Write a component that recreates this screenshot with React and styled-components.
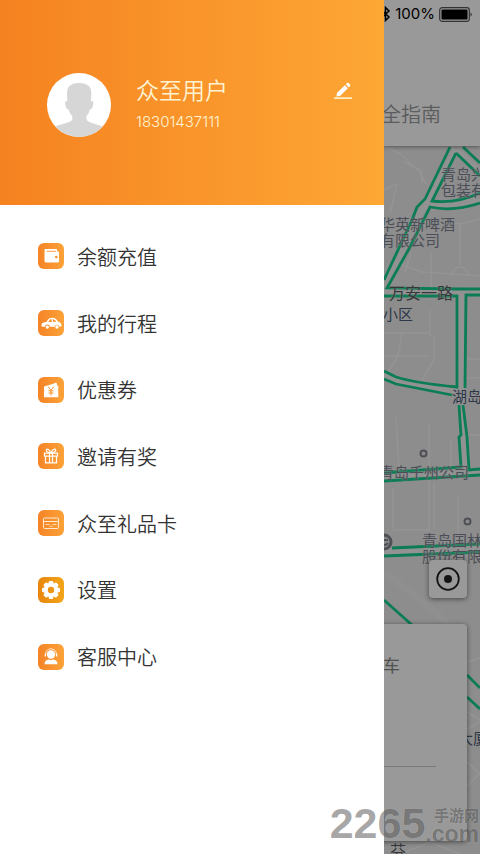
import React from "react";
import styled, { createGlobalStyle } from "styled-components";

const CJK = `"Noto Sans CJK SC", sans-serif`;

const MENU = [
  { icon: "wallet", label: "余额充值" },
  { icon: "car", label: "我的行程" },
  { icon: "coupon", label: "优惠券" },
  { icon: "gift", label: "邀请有奖" },
  { icon: "card", label: "众至礼品卡" },
  { icon: "gear", label: "设置", deep: true },
  { icon: "service", label: "客服中心" },
];

const PLACES = [
  { x: 441, y: 166, lines: ["青岛兴", "包装有"] },
  { x: 380, y: 216, lines: ["华英新啤酒", "有限公司"] },
  { x: 389, y: 284, lines: ["万安一路"], tone: "road" },
  { x: 383, y: 306, lines: ["小区"], tone: "area" },
  { x: 452, y: 388, lines: ["湖岛"], tone: "area" },
  { x: 379, y: 464, lines: ["青岛千州公司"] },
  { x: 422, y: 532, lines: ["青岛国林", "股份有限"] },
  { x: 458, y: 730, lines: ["大厦"], tone: "area" },
  { x: 390, y: 842, lines: ["芬"], tone: "road" },
];

const MAP_TOP = 146;

const TONES = {
  company: "#7d8391",
  road: "#5a5d63",
  area: "#4c5d79",
};

const GEAR_TEETH = [0, 45, 90, 135, 180, 225, 270, 315];

function MenuIcon({ name }) {
  switch (name) {
    case "wallet":
      return (
        <svg viewBox="0 0 26 26" fill="none">
          <path
            d="M6.500 7.200c0-.8.5-1.200 1.200-1.200H18c.8 0 1.200.4 1.200 1.200v1.300h.6c.7 0 1.200.5 1.200 1.200v8.600c0 .8-.5 1.300-1.300 1.300H8.300c-1.100 0-1.800-.7-1.800-1.800z"
            fill="#fff"
          />
          <path d="M8.500 8.300H18" stroke="#f7922b" strokeWidth=".9" />
          <circle cx="18.300" cy="14" r="1.300" fill="#f7922b" />
        </svg>
      );
    case "car":
      return (
        <svg viewBox="0 0 26 26">
          <path
            d="M3.500 16.500c-.3-2.600.4-3.700 3-4.200l1.800-.3c1.600-2.900 3.200-4.300 6-4.300 2.800.1 4.300 1.500 5.700 3.900 2.700.7 3.800 2.200 3.500 4.700l-2 .4a2.400 2.400 0 0 0-4.700.1h-5a2.400 2.400 0 0 0-4.800 0z"
            fill="#fff"
          />
          <path
            d="M10.200 11.900l1.900-2.300c.5-.3 1-.4 1.600-.4v2.700zM14.900 9.200c1.500.1 2.500.9 3.400 2.500h-3.400z"
            fill="#f7922b"
          />
          <circle cx="9.300" cy="17.100" r="1.700" fill="#fff" />
          <circle cx="19" cy="17" r="1.700" fill="#fff" />
        </svg>
      );
    case "coupon":
      return (
        <svg viewBox="0 0 26 26" fill="none">
          <path
            d="M6 9.500l8.500-2.600 4-1.400.8 3.200h1v4.300l-.6.6.6.6v6H6v-6l.6-.6-.6-.6z"
            fill="#fff"
          />
          <path
            d="M10.300 9.700l2.700 3.700 2.700-3.700M13 13.400v5.200M10.500 13.800h5M10.500 16h5"
            stroke="#f7922b"
            strokeWidth="1"
          />
        </svg>
      );
    case "gift":
      return (
        <svg viewBox="0 0 26 26" fill="none" stroke="#fff" strokeWidth="1.200">
          <path d="M6.500 10.200h13v3h-13zM7.500 13.200h11v6.600h-11zM11.500 10.200v9.600M14.500 10.200v9.600" />
          <path d="M13 10c-1.500-3.600-3.800-4.500-4.600-3.200-.7 1.500 1.500 2.900 4.600 3.200zM13 10c1.500-3.600 3.800-4.500 4.600-3.200.7 1.500-1.500 2.900-4.600 3.200z" />
        </svg>
      );
    case "card":
      return (
        <svg viewBox="0 0 26 26" fill="none" stroke="#ffe9d0" strokeWidth="1">
          <rect x="5.500" y="8" width="15" height="10.500" rx="1" />
          <path d="M5.500 11.500h15" />
          <path d="M7.500 14.500h4M14.500 14.500h4M11.500 16.300h3" strokeWidth=".8" />
        </svg>
      );
    case "gear":
      return (
        <svg viewBox="0 0 26 26" fill="none">
          {GEAR_TEETH.map((deg) => (
            <rect
              key={deg}
              x="10.700"
              y="4"
              width="4.600"
              height="5"
              rx="1.200"
              fill="#fff"
              transform={`rotate(${deg} 13 13)`}
            />
          ))}
          <circle cx="13" cy="13" r="5.200" stroke="#fff" strokeWidth="4" />
        </svg>
      );
    default:
      return (
        <svg viewBox="0 0 26 26" fill="none">
          <circle cx="13" cy="10.500" r="4.200" fill="#fff" />
          <path
            d="M7.500 11.500V10.300a5.500 5.500 0 0 1 11 0v1.200"
            stroke="#fff"
            strokeWidth=".8"
          />
          <path d="M7.300 9.800v2.600M18.700 9.800v2.600" stroke="#fff" strokeWidth="1.200" />
          <path
            d="M6.500 20.200c0-3 1.800-4.300 4.400-4.700l2.100.8 2.100-.8c2.600.4 4.400 1.700 4.400 4.700z"
            fill="#fff"
          />
        </svg>
      );
  }
}

function StreetMap() {
  return (
    <Streets viewBox="0 146 480 708" preserveAspectRatio="xMaxYMin slice" aria-hidden="true">
      <g fill="none" stroke="#fafafa" strokeWidth="1.500" opacity=".8">
        <path d="M384 146l17 8 18 18 7 12M384 190l13-6-7 30M402 161l20 10v12" />
        <path d="M410 245l-8 20 20 7 58 4M425 222l35 2 20-5M431 253v36M405 273l6-20" />
        <path d="M460 222v43M452 275a8 8 0 1 1 16 0M384 333h45l5 5v22l-12 20M430 310v22M402 334l-4 22-14 22M384 356h45" />
        <path d="M466 359h14M466 378h14M396 417l3 50M429 424v56M451 440v36M467 435h13" />
        <path d="M393 488v42h36v-50M434 482v48M458 496v48" />
        <path d="M467 662l13-4M467 730l13-9M467 762l13 12-13 12M400 854l30-12 30 12M467 712l13 8" />
        <path d="M384 572l44 34 20 18" strokeWidth="7" opacity=".4" />
      </g>
      <g fill="none" stroke="#fafafa" strokeWidth="6" opacity=".6">
        <path d="M456 150l-36 64-36 76M384 292h96M461 292v98l5 80M384 375l12 6 60 11M384 478l96-6M384 552l96-5M456 150l24 22M430 204l24 2 26-8" />
      </g>
      <g fill="none" stroke="#12d08c" strokeWidth="2.800">
        <path d="M450 147l-25 52-8 8-5 13-28 60" />
        <path d="M456 153l-24 48q24 3 48-8M456 153l24 23M463 147l17 16" />
        <path d="M480 203q-27 9-50 4l-20 40-23 41 70 1h23" />
        <path d="M384 296h73v91q-42-4-61-10l-12-6M480 295h-14l-1 93" />
        <path d="M384 379l12 5 56 11M459 405l2 30-2 2 2 30-77 6M463 405l4 32 2 33 11-1M384 481l96-6" />
        <path d="M392 548l88-4M384 556l96-4M384 600l28 25M467 675l13 13M467 697l13 12" />
      </g>
      <g fill="#e6e6e6" stroke="#82868f" strokeWidth="2">
        <circle cx="423.500" cy="453.500" r="3" />
        <circle cx="467.500" cy="521.500" r="3" />
        <circle cx="384" cy="542" r="7" strokeWidth="3" />
        <path d="M384 540h4M384 545q3 0 4-2" fill="none" />
      </g>
    </Streets>
  );
}

export default function App() {
  return (
    <Screen>
      <GlobalStyle />
      <TopBar>
        <StatusBar>
          <svg width="10" height="16" viewBox="0 0 10 16" fill="none" stroke="#000" strokeWidth="1.500">
            <path d="M1 4.500l7 6.500-3.500 3.500v-13L8 5l-7 6.500" />
          </svg>
          <span>100%</span>
          <svg width="34" height="15" viewBox="0 0 34 15" fill="none">
            <rect x=".7" y=".7" width="29.600" height="13.600" rx="2.500" stroke="#555" strokeWidth="1.200" />
            <rect x="2.500" y="2.500" width="26" height="10" rx="1" fill="#000" />
            <path d="M31.500 5.500c1.700.7 1.700 3.300 0 4z" fill="#555" />
          </svg>
        </StatusBar>
        <GuideTab>全指南</GuideTab>
      </TopBar>

      <MapArea>
        <StreetMap />
        {PLACES.map(({ x, y, lines, tone = "company" }) => (
          <Place key={lines[0]} $x={x} $y={y - MAP_TOP} $tone={tone}>
            {lines.map((line) => (
              <span key={line}>{line}</span>
            ))}
          </Place>
        ))}
        <LocateButton type="button" aria-label="定位">
          <svg width="24" height="24" viewBox="0 0 24 24" fill="none">
            <circle cx="12" cy="12" r="10.800" stroke="#222" strokeWidth="1.800" />
            <circle cx="12" cy="12" r="4" fill="#222" />
          </svg>
        </LocateButton>
        <RideCard>
          <RideTitle>车</RideTitle>
          <Divider />
        </RideCard>
      </MapArea>

      <Scrim />

      <Drawer>
        <Profile>
          <svg width="64" height="64" viewBox="0 0 64 64">
            <clipPath id="avatar">
              <circle cx="32" cy="32" r="32" />
            </clipPath>
            <circle cx="32" cy="32" r="32" fill="#fff" />
            <path
              clipPath="url(#avatar)"
              fill="#d6d6d6"
              d="M20.500 28c-.8-6-.9-12 1.500-14.500 2-2.400 5.500-3.500 10-3.500s8 1.100 10.300 3.500c2.400 2.500 2.300 8.500 1.500 14.500 3 0 3 1.500 2 5-.6 2.400-1.300 3.500-3 3.500-.6 3-1.800 4.700-3.300 6.500v3.500c2 3.500 9.500 4 16 7V66H8V53.500c6.500-3 15.500-3.500 17.300-7V43c-1.700-1.800-3-3.500-3.600-6.500-1.700 0-2.400-1.100-3-3.500-1-3.500-1-5 1.800-5z"
            />
          </svg>
          <Identity>
            <UserName>众至用户</UserName>
            <Phone>18301437111</Phone>
          </Identity>
          <EditButton type="button" aria-label="编辑">
            <svg width="18" height="18" viewBox="0 0 18 18" fill="#fff">
              <path d="M2.500 14.500l.4-3.600 8-7.700 3 3.100-7.900 7.800zM11.800 2.300l1.300-1.200c.5-.4 1-.4 1.500 0l1.500 1.500c.4.500.4 1 0 1.500l-1.300 1.300z" />
              <path d="M0 15.300h18V17H0z" fill="#fff0c4" />
            </svg>
          </EditButton>
        </Profile>
        <Menu>
          {MENU.map(({ icon, label, deep }) => (
            <MenuItem key={icon} href="#">
              <IconTile $deep={deep}>
                <MenuIcon name={icon} />
              </IconTile>
              {label}
            </MenuItem>
          ))}
        </Menu>
      </Drawer>

      <Watermark>
        <WatermarkNumber>2265</WatermarkNumber>
        <WatermarkSite>
          <span>手游网</span>
          <b>.com</b>
        </WatermarkSite>
      </Watermark>
    </Screen>
  );
}

const GlobalStyle = createGlobalStyle`
  * {
    box-sizing: border-box;
  }
  body {
    margin: 0;
    font-family: ${CJK};
  }
`;

const Screen = styled.div`
  position: relative;
  display: flex;
  flex-direction: column;
  min-height: 100vh;
  overflow: hidden;
  background: #ebebeb;
`;

const TopBar = styled.header`
  position: relative;
  z-index: 1;
  display: flex;
  flex-direction: column;
  justify-content: space-between;
  align-items: flex-end;
  height: 146px;
  padding-bottom: 17px;
  background: #fff;
  box-shadow: 0 1px 4px rgba(0, 0, 0, 0.4);
`;

const StatusBar = styled.div`
  display: flex;
  align-items: center;
  gap: 4px;
  height: 28px;
  padding-right: 7px;
  font: 15px/28px Inter, sans-serif;
`;

const GuideTab = styled.div`
  padding-right: 39px;
  font-size: 20px;
  font-weight: 350;
  line-height: 30px;
  color: #999;
`;

const MapArea = styled.main`
  position: relative;
  flex: 1;
  display: flex;
  flex-direction: column;
  justify-content: flex-end;
  gap: 26px;
  padding: 0 13px 13px;
  overflow: hidden;
`;

const Streets = styled.svg`
  position: absolute;
  inset: 0;
  width: 100%;
  height: 100%;
`;

const Place = styled.div`
  position: absolute;
  left: ${({ $x }) => $x}px;
  top: ${({ $y }) => $y}px;
  display: flex;
  flex-direction: column;
  font-size: ${({ $tone }) => ($tone === "road" ? 16 : 15)}px;
  line-height: 16px;
  white-space: nowrap;
  color: ${({ $tone }) => TONES[$tone]};
  text-shadow: 0 0 2px #ebebeb;
`;

const LocateButton = styled.button`
  position: relative;
  display: grid;
  place-items: center;
  align-self: flex-end;
  width: 38px;
  height: 38px;
  padding: 0;
  border: 0;
  border-radius: 4px;
  background: #fff;
  box-shadow: 0 1px 5px rgba(0, 0, 0, 0.5);
`;

const RideCard = styled.section`
  position: relative;
  height: 217px;
  padding: 28px 31px 0;
  border-radius: 4px;
  background: #fff;
  box-shadow: 0 1px 5px rgba(0, 0, 0, 0.5);
`;

const RideTitle = styled.div`
  padding-right: 36px;
  font-size: 17px;
  line-height: 26px;
  text-align: right;
  color: #888;
`;

const Divider = styled.hr`
  margin: 88px 0 0;
  border: 0;
  border-top: 1px solid #ccc;
`;

const Scrim = styled.div`
  position: absolute;
  inset: 0;
  z-index: 2;
  background: rgba(0, 0, 0, 0.4);
`;

const Drawer = styled.aside`
  position: absolute;
  inset: 0 auto 0 0;
  z-index: 3;
  width: 80%;
  background: #fff;
`;

const Profile = styled.div`
  display: flex;
  align-items: center;
  height: 205px;
  padding: 5px 32px 0 47px;
  background: linear-gradient(90deg, #f58220, #fda735);
`;

const Identity = styled.div`
  flex: 1;
  margin-left: 25px;
  color: #fff3d2;
`;

const UserName = styled.div`
  font-size: 23px;
  font-weight: 350;
  line-height: 34px;
`;

const Phone = styled.div`
  font: 300 15px/32px Inter, sans-serif;
`;

const EditButton = styled.button`
  display: flex;
  margin-bottom: 28px;
  padding: 0;
  border: 0;
  background: none;
`;

const Menu = styled.nav`
  display: grid;
  grid-auto-rows: 1fr;
  height: 485px;
  padding-top: 18px;
`;

const MenuItem = styled.a`
  display: flex;
  align-items: center;
  gap: 13px;
  padding-left: 38px;
  font-size: 20px;
  font-weight: 350;
  color: #333;
  text-decoration: none;
`;

const IconTile = styled.span`
  display: flex;
  width: 26px;
  height: 26px;
  border-radius: 6px;
  background: ${({ $deep }) =>
    $deep
      ? "linear-gradient(90deg, #e8860c, #f3a51a)"
      : "linear-gradient(90deg, #f58427, #fca238)"};

  svg {
    width: 100%;
  }
`;

const Watermark = styled.div`
  position: absolute;
  right: 1px;
  bottom: 9px;
  z-index: 4;
  display: flex;
  align-items: flex-end;
  color: rgba(0, 0, 0, 0.36);
  text-shadow: 0 0 1px rgba(255, 255, 255, 0.3);
`;

const WatermarkNumber = styled.span`
  font: bold 43px/44px "Liberation Sans", sans-serif;
`;

const WatermarkSite = styled.span`
  display: flex;
  flex-direction: column;
  align-items: flex-end;
  font-size: 15px;
  font-weight: bold;
  line-height: 16px;

  b {
    font: bold 23px/22px "Liberation Sans", sans-serif;
  }
`;
